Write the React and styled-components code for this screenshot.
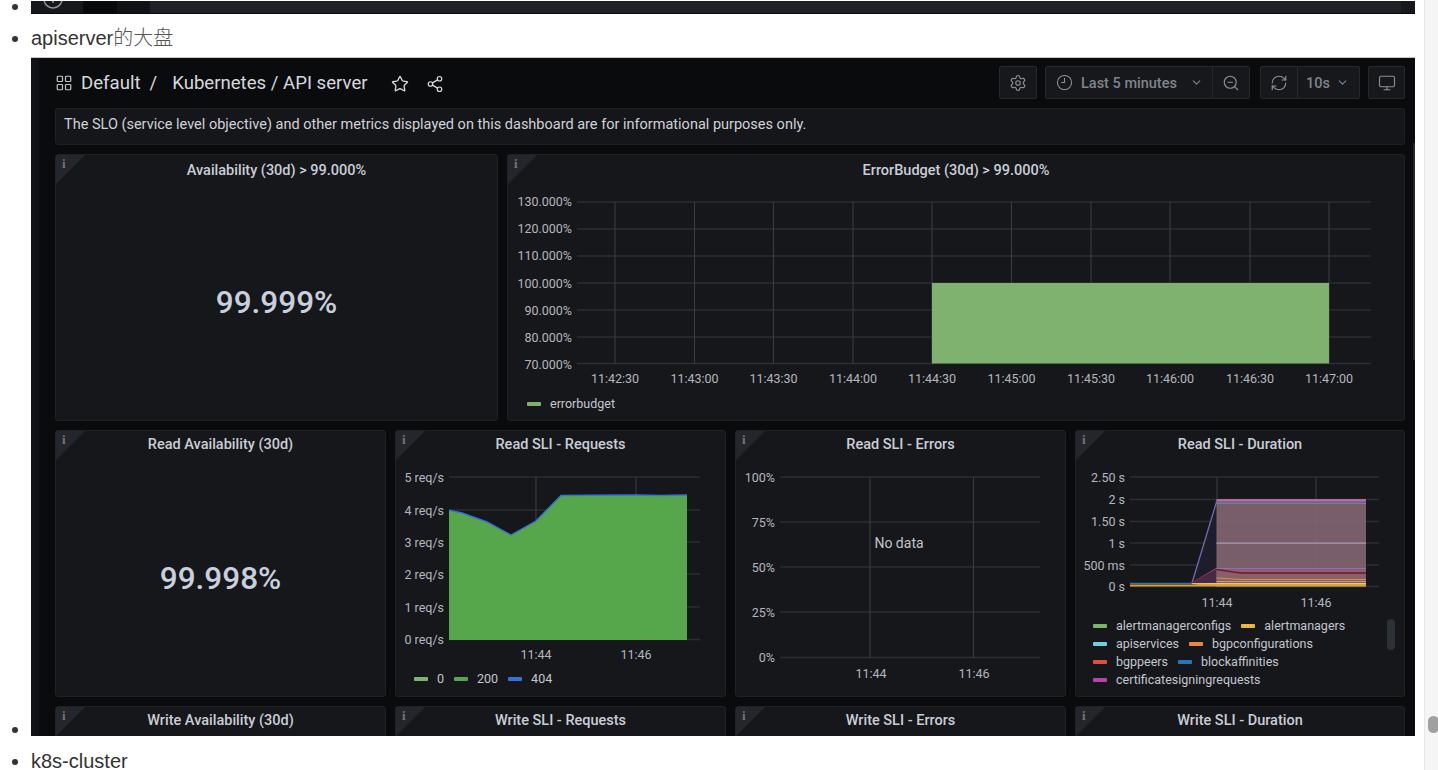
import React from 'react';
import styled, { createGlobalStyle } from 'styled-components';
import { LayoutGrid, Star, Share2, Settings, Clock9, ChevronDown, ZoomOut, RefreshCw, Monitor } from 'lucide-react';

const Global = createGlobalStyle`
  html, body { margin: 0; padding: 0; background: #fff; overflow: hidden; height: 100%; }
  #root { height: 100%; }
`;

const Page = styled.div`
  display: flex;
  width: 1438px;
  height: 770px;
  overflow: hidden;
  background: #fff;
`;
const Content = styled.div`
  flex: 1;
  min-width: 0;
  overflow: hidden;
`;
const List = styled.ul`
  margin: -6px 0 0;
  padding: 0 0 0 31px;
  font: 20px/24px "Liberation Sans", "Noto Sans CJK SC", sans-serif;
  color: #333;
`;
const Item = styled.li`
  margin-bottom: 8px;
`;
const LastItem = styled.li`
  margin-top: 11px;
  line-height: 18px;
`;
const Cjk = styled.span`
  font-family: "Noto Sans CJK SC", sans-serif;
  font-weight: 300;
  line-height: 0;
  color: #555;
`;
const ScrollTrack = styled.div`
  flex: none;
  width: 14px;
  box-sizing: border-box;
  padding: 716px 0 0 3px;
  background: #f5f5f5;
  border-left: 1px solid #e8e8e8;
`;
const ScrollThumb = styled.div`
  width: 11px;
  height: 17px;
  background: #a0a0a0;
  border-radius: 6px;
`;

/* clipped screenshot above */
const Stub = styled.div`
  display: inline-flex;
  width: 1384px;
  height: 13px;
  overflow: hidden;
  border-bottom: 1px solid #08090b;
  box-sizing: border-box;
`;
const StubPart = styled.div`
  flex: ${p => (p.$w ? `0 0 ${p.$w}px` : '1')};
  background: ${p => p.$bg};
  display: flex;
  justify-content: center;
  align-items: flex-start;
  padding-right: ${p => p.$pr || 0}px;
  box-sizing: border-box;
`;

/* Grafana screenshot */
const Dash = styled.div`
  display: inline-flex;
  width: 1384px;
  height: 678px;
  overflow: hidden;
  background: #0a0b0d;
  box-shadow: 0 -1px 0 #c4c4c4;
  position: relative;
  font-family: Roboto, "Liberation Sans", sans-serif;
  color: #ccd0d8;
`;
const SideStrip = styled.div`
  flex: 0 0 8px;
  background: #111215;
`;
const Main = styled.div`
  flex: 1;
  min-width: 0;
  padding: 0 10px 0 16px;
`;
const InnerScroll = styled.div`
  position: absolute;
  right: 0;
  top: 85px;
  width: 2px;
  height: 217px;
  background: #24262a;
`;
const Nav = styled.div`
  height: 50px;
  display: flex;
  align-items: center;
  padding-bottom: 1px;
  box-sizing: border-box;
`;
const Crumbs = styled.div`
  display: flex;
  align-items: center;
  font-size: 18.6px;
  color: #d8d9dc;
`;
const CrumbIcon = styled.span`
  display: flex;
  margin-right: 8px;
  color: #c4c6cc;
`;
const Slash = styled.span`
  margin: 0 15px 0 9px;
`;
const NavAction = styled.span`
  display: flex;
  margin-left: ${p => p.$ml}px;
  margin-top: 2px;
  color: #d8d9dc;
`;
const Toolbar = styled.div`
  margin-left: auto;
  display: flex;
  align-items: center;
`;
const BtnGroup = styled.div`
  display: flex;
  height: 33px;
  margin-left: ${p => p.$ml || 0}px;
  background: #16181c;
  border: 1px solid #26282c;
  border-radius: 2px;
  box-sizing: border-box;
  color: #8d9197;
`;
const Seg = styled.div`
  width: ${p => p.$w}px;
  display: flex;
  align-items: center;
  justify-content: ${p => (p.$between ? 'flex-start' : 'center')};
  padding: ${p => (p.$between ? '0 0 0 ' + p.$between + 'px' : '0')};
  box-sizing: border-box;
  & + & { border-left: 1px solid #26282c; }
`;
const SegLabel = styled.span`
  font-size: 14.5px;
  font-weight: 500;
  margin-left: ${p => p.$ml || 0}px;
  padding-top: 2px;
  color: #7f848b;
`;
const SegChevron = styled.span`
  display: flex;
  margin-left: ${p => p.$ml}px;
  color: #7f848b;
`;
const Banner = styled.div`
  height: 37px;
  box-sizing: border-box;
  padding: 0 8px 3px;
  display: flex;
  align-items: center;
  font-size: 14.5px;
  color: #d0d2d8;
  background: #15161a;
  border: 1px solid #1e2024;
  border-radius: 3px;
  margin-bottom: 9px;
`;
const Row = styled.div`
  display: grid;
  grid-template-columns: ${p => p.$cols};
  gap: 9px;
  margin-bottom: 9px;
`;
const Panel = styled.div`
  position: relative;
  height: 267px;
  box-sizing: border-box;
  display: flex;
  flex-direction: column;
  background: #16171b;
  border: 1px solid #1f2125;
  border-radius: 3px;
  &::before {
    content: "";
    position: absolute;
    left: 0;
    top: 0;
    width: 29px;
    height: 29px;
    background: #24262b;
    clip-path: polygon(0 0, 100% 0, 0 100%);
  }
`;
const InfoMark = styled.span`
  position: absolute;
  left: 6px;
  top: 1px;
  font: bold 13px/16px "Liberation Serif", serif;
  color: #72757b;
`;
const Title = styled.div`
  flex: none;
  height: ${p => p.$h}px;
  box-sizing: border-box;
  display: flex;
  align-items: center;
  justify-content: center;
  font-size: 14.5px;
  font-weight: 500;
  color: #c9ced6;
`;
const Stat = styled.div`
  flex: 1;
  display: flex;
  align-items: center;
  justify-content: center;
  font-size: 31.5px;
  font-weight: 500;
  color: #c7d0dc;
  padding-top: ${p => (p.$low ? '4px' : '0')};
`;
const ChartSvg = styled.svg`
  display: block;
  flex: none;
  font-family: Roboto, "Liberation Sans", sans-serif;
  font-size: 12.5px;
  fill: #b4b6bb;
`;
const Legend = styled.div`
  position: relative;
  display: flex;
  flex-wrap: wrap;
  column-gap: ${p => p.$gap ?? 10}px;
  padding-left: ${p => p.$left}px;
  width: ${p => p.$width}px;
  box-sizing: border-box;
  margin-top: ${p => p.$top || 0}px;
  font-size: 12.5px;
  line-height: 18px;
  color: #c3c7ce;
`;
const LegendItem = styled.div`
  display: flex;
  align-items: center;
  &::before {
    content: "";
    width: 14px;
    height: 4px;
    margin-right: 9px;
    background: ${p => p.$color};
    border-radius: 1px;
  }
`;
const LegendThumb = styled.div`
  position: absolute;
  left: 311px;
  top: 2px;
  width: 8px;
  height: 31px;
  border-radius: 4px;
  background: #2c3135;
`;

const Grid = ({ xs = [], ys = [], x1, x2, y1, y2 }) => (
  <g>
    {ys.map(y => <line key={y} x1={x1} x2={x2} y1={y} y2={y} stroke="#2c2e32" strokeWidth="1.3" />)}
    {xs.map(x => <line key={x} x1={x} x2={x} y1={y1} y2={y2} stroke="#3a3c40" strokeWidth="1.1" />)}
  </g>
);
const YLabels = ({ x, items }) => (
  <g textAnchor="end">
    {items.map(([t, y]) => <text key={t} x={x} y={y + 4.5}>{t}</text>)}
  </g>
);
const XLabels = ({ y, items }) => (
  <g textAnchor="middle">
    {items.map(([t, x]) => <text key={t} x={x} y={y + 4.5}>{t}</text>)}
  </g>
);
const Chart = ({ x, y, w, h, children }) => (
  <ChartSvg width={w} height={h} viewBox={`${x} ${y} ${w} ${h}`}>{children}</ChartSvg>
);

const ebX = [[`11:42:30`, 615], [`11:43:00`, 694.5], [`11:43:30`, 773.5], [`11:44:00`, 853], [`11:44:30`, 932], [`11:45:00`, 1011.5], [`11:45:30`, 1091], [`11:46:00`, 1170], [`11:46:30`, 1250], [`11:47:00`, 1329]];
const ebLines = [202, 229, 256, 283, 310, 337, 363.5];
const ebY = [['130.000%', 201], ['120.000%', 228], ['110.000%', 255], ['100.000%', 283], ['90.000%', 310], ['80.000%', 337], ['70.000%', 364]];

const ErrorBudgetChart = () => (
  <Chart x={508} y={186} w={896} h={206}>
    <Grid x1={577} x2={1371} y1={202} y2={364} xs={ebX.map(d => d[1])} ys={ebLines} />
    <rect x="932" y="283" width="397" height="80.5" fill="#7fb26e" />
    <YLabels x={572} items={ebY} />
    <XLabels y={378} items={ebX} />
  </Chart>
);

const reqY = [['5 req/s', 477], ['4 req/s', 510], ['3 req/s', 542], ['2 req/s', 574], ['1 req/s', 607], ['0 req/s', 639.5]];
const reqPts = '449,510.3 462,513 487,522 511,535 536,521 561,495.5 590,495.3 636,495 660,495.5 687,495';
const RequestsChart = () => (
  <Chart x={396} y={458} w={329} h={206}>
    <Grid x1={449} x2={700} y1={477} y2={640} xs={[536, 636]} ys={reqY.map(d => d[1])} />
    <polygon points={`${reqPts} 687,640 449,640`} fill="#56a64b" />
    <polyline points={reqPts} fill="none" stroke="#3274d9" strokeWidth="1.4" />
    <YLabels x={444} items={reqY} />
    <XLabels y={654} items={[['11:44', 536], ['11:46', 636]]} />
  </Chart>
);

const errY = [['100%', 477], ['75%', 522], ['50%', 567], ['25%', 612], ['0%', 657.5]];
const ErrorsChart = () => (
  <Chart x={736} y={458} w={329} h={232}>
    <Grid x1={780} x2={1040} y1={477} y2={658} xs={[870, 973.5]} ys={errY.map(d => d[1])} />
    <YLabels x={775} items={errY} />
    <XLabels y={673} items={[['11:44', 871], ['11:46', 974]]} />
    <text x="899" y="548" textAnchor="middle" fontSize="14" fill="#c3c5ca">No data</text>
  </Chart>
);

const durY = [['2.50 s', 477], ['2 s', 499.5], ['1.50 s', 521.5], ['1 s', 543], ['500 ms', 565], ['0 s', 586.5]];
const DurationChart = () => (
  <Chart x={1076} y={458} w={328} h={158}>
    <Grid x1={1130} x2={1379} y1={477} y2={587} xs={[1217, 1316]} ys={durY.map(d => d[1])} />
    <polygon points="1192,583 1216.5,502 1216.5,586" fill="#1d1d2c" />
    <polygon points="1192,583 1216.5,569 1216.5,586" fill="#472a4a" />
    <rect x="1216.5" y="500" width="149.5" height="86.5" fill="#80646f" fillOpacity="0.93" />
    <rect x="1216.5" y="569.5" width="149.5" height="17" fill="#8a5f68" />
    <line x1="1216.5" x2="1366" y1="503.5" y2="503.5" stroke="#8f7591" />
    <line x1="1216.5" x2="1366" y1="543.2" y2="543.2" stroke="#a69fb5" strokeWidth="1.3" />
    <polyline points="1192,583 1216.5,502 1216.5,501.5 1366,501.5" fill="none" stroke="#7a66b8" strokeWidth="1.3" />
    <line x1="1216.5" x2="1366" y1="499.8" y2="499.8" stroke="#e57fb3" strokeWidth="1.2" />
    <polyline points="1192,583 1216.5,568.5 1366,568.5" fill="none" stroke="#8a6fc0" strokeWidth="1.2" />
    <line x1="1216.5" x2="1366" y1="570.5" y2="570.5" stroke="#a5567c" />
    <polyline points="1192,583 1216.5,569.5 1241,573 1366,573" fill="none" stroke="#6b1d24" strokeWidth="1.3" />
    <polyline points="1216.5,578 1241,579.5 1366,579.5" fill="none" stroke="#d0964e" strokeWidth="1.1" />
    <line x1="1216.5" x2="1366" y1="581.5" y2="581.5" stroke="#c79a72" strokeWidth="1" />
    <polygon points="1130,584.5 1192,584.5 1216.5,583 1366,583 1366,586.5 1130,586.5" fill="#d6a32e" />
    <line x1="1192" x2="1366" y1="583.6" y2="583.6" stroke="#e9c9a0" strokeWidth="1" />
    <line x1="1130" x2="1192" y1="583.3" y2="583.3" stroke="#1f78c1" strokeWidth="1.2" />
    <YLabels x={1125} items={durY} />
    <XLabels y={602} items={[['11:44', 1217], ['11:46', 1316]]} />
  </Chart>
);

const Info = () => <InfoMark>i</InfoMark>;

const App = () => (
  <Page>
    <Global />
    <Content>
      <List>
        <Item>
          <Stub>
            <StubPart $w={52} $pr={8} $bg="#17181c">
              <svg width="20" height="12" viewBox="0 0 20 12" fill="none" stroke="#8f9195" strokeWidth="1.5">
                <circle cx="10" cy="-2" r="9" />
                <line x1="10" y1="0" x2="10" y2="2" />
              </svg>
            </StubPart>
            <StubPart $w={34} $bg="#08090a" />
            <StubPart $w={33} $bg="#111216" />
            <StubPart $bg="#1f2126" />
            <StubPart $w={14} $bg="#17181c" />
          </Stub>
        </Item>
        <Item>apiserver<Cjk>的大盘</Cjk></Item>
        <Item>
          <Dash>
            <SideStrip />
            <Main>
              <Nav>
                <Crumbs>
                  <CrumbIcon><LayoutGrid size={18} strokeWidth={1.6} /></CrumbIcon>
                  <span>Default</span>
                  <Slash>/</Slash>
                  <span>Kubernetes / API server</span>
                </Crumbs>
                <NavAction $ml={23}><Star size={18} strokeWidth={1.8} /></NavAction>
                <NavAction $ml={17}><Share2 size={18} strokeWidth={1.6} /></NavAction>
                <Toolbar>
                  <BtnGroup>
                    <Seg $w={36}><Settings size={18} strokeWidth={1.5} /></Seg>
                  </BtnGroup>
                  <BtnGroup $ml={8}>
                    <Seg $w={166} $between={10}>
                      <Clock9 size={17} strokeWidth={1.5} />
                      <SegLabel $ml={8}>Last 5 minutes</SegLabel>
                      <SegChevron $ml={13}><ChevronDown size={13} strokeWidth={2} /></SegChevron>
                    </Seg>
                    <Seg $w={37}><ZoomOut size={18} strokeWidth={1.5} /></Seg>
                  </BtnGroup>
                  <BtnGroup $ml={10}>
                    <Seg $w={36}><RefreshCw size={18} strokeWidth={1.5} /></Seg>
                    <Seg $w={62} $between={8}>
                      <SegLabel>10s</SegLabel>
                      <SegChevron $ml={6}><ChevronDown size={13} strokeWidth={2} /></SegChevron>
                    </Seg>
                  </BtnGroup>
                  <BtnGroup $ml={8}>
                    <Seg $w={35}><Monitor size={18} strokeWidth={1.5} /></Seg>
                  </BtnGroup>
                </Toolbar>
              </Nav>
              <Banner>The SLO (service level objective) and other metrics displayed on this dashboard are for informational purposes only.</Banner>
              <Row $cols="443px 1fr">
                <Panel>
                  <Info />
                  <Title $h={31}>Availability (30d) &gt; 99.000%</Title>
                  <Stat>99.999%</Stat>
                </Panel>
                <Panel>
                  <Info />
                  <Title $h={31}>ErrorBudget (30d) &gt; 99.000%</Title>
                  <ErrorBudgetChart />
                  <Legend $left={19} $width={400} $top={3}>
                    <LegendItem $color="#7eb26d">errorbudget</LegendItem>
                  </Legend>
                </Panel>
              </Row>
              <Row $cols="331px 331px 331px 1fr">
                <Panel>
                  <Info />
                  <Title $h={27}>Read Availability (30d)</Title>
                  <Stat $low>99.998%</Stat>
                </Panel>
                <Panel>
                  <Info />
                  <Title $h={27}>Read SLI - Requests</Title>
                  <RequestsChart />
                  <Legend $left={18} $width={300} $gap={10} $top={6}>
                    <LegendItem $color="#7eb26d">0</LegendItem>
                    <LegendItem $color="#56a64b">200</LegendItem>
                    <LegendItem $color="#3274d9">404</LegendItem>
                  </Legend>
                </Panel>
                <Panel>
                  <Info />
                  <Title $h={27}>Read SLI - Errors</Title>
                  <ErrorsChart />
                </Panel>
                <Panel>
                  <Info />
                  <Title $h={27}>Read SLI - Duration</Title>
                  <DurationChart />
                  <Legend $left={17} $width={310} $top={1}>
                    <LegendItem $color="#7eb26d">alertmanagerconfigs</LegendItem>
                    <LegendItem $color="#eab839">alertmanagers</LegendItem>
                    <LegendItem $color="#6ed0e0">apiservices</LegendItem>
                    <LegendItem $color="#ef843c">bgpconfigurations</LegendItem>
                    <LegendItem $color="#e24d42">bgppeers</LegendItem>
                    <LegendItem $color="#1f78c1">blockaffinities</LegendItem>
                    <LegendItem $color="#ba43a9">certificatesigningrequests</LegendItem>
                    <LegendThumb />
                  </Legend>
                </Panel>
              </Row>
              <Row $cols="331px 331px 331px 1fr">
                <Panel><Info /><Title $h={27}>Write Availability (30d)</Title></Panel>
                <Panel><Info /><Title $h={27}>Write SLI - Requests</Title></Panel>
                <Panel><Info /><Title $h={27}>Write SLI - Errors</Title></Panel>
                <Panel><Info /><Title $h={27}>Write SLI - Duration</Title></Panel>
              </Row>
            </Main>
            <InnerScroll />
          </Dash>
        </Item>
        <LastItem>k8s-cluster</LastItem>
      </List>
    </Content>
    <ScrollTrack><ScrollThumb /></ScrollTrack>
  </Page>
);

export default App;
